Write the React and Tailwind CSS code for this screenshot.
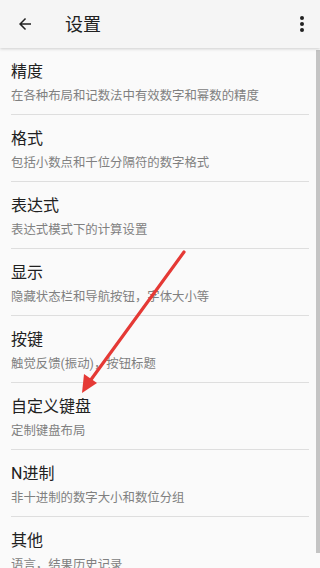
import React from 'react';

const items = [
  { title: '精度', desc: '在各种布局和记数法中有效数字和幂数的精度' },
  { title: '格式', desc: '包括小数点和千位分隔符的数字格式' },
  { title: '表达式', desc: '表达式模式下的计算设置' },
  { title: '显示', desc: '隐藏状态栏和导航按钮，字体大小等' },
  { title: '按键', desc: '触觉反馈(振动)，按钮标题' },
  { title: '自定义键盘', desc: '定制键盘布局' },
  { title: 'N进制', desc: '非十进制的数字大小和数位分组' },
  { title: '其他', desc: '语言，结果历史记录' },
];

export default function App() {
  return (
    <div
      className="relative w-[320px] h-[568px] overflow-hidden bg-[#fafafa]"
      style={{ fontFamily: 'Roboto, "Noto Sans CJK SC", sans-serif' }}
    >
      {/* Toolbar */}
      <div className="relative z-10 h-[48px] bg-[#f5f5f5] flex items-center shadow-[0_1px_3px_rgba(0,0,0,0.18)]">
        <div className="w-[50px] flex justify-center">
          <svg width="18" height="18" viewBox="0 0 24 24">
            <path d="M20 11H7.83l5.59-5.59L12 4l-8 8 8 8 1.41-1.41L7.83 13H20v-2z" fill="#212121" />
          </svg>
        </div>
        <div className="ml-[15px] text-[18px] text-[#212121]">设置</div>
        <div className="ml-auto mr-[16px] flex flex-col items-center gap-[2px]">
          <span className="w-[4px] h-[4px] rounded-full bg-[#212121]" />
          <span className="w-[4px] h-[4px] rounded-full bg-[#212121]" />
          <span className="w-[4px] h-[4px] rounded-full bg-[#212121]" />
        </div>
      </div>

      {/* List */}
      <div className="flex flex-col">
        {items.map((it) => (
          <div key={it.title} className="mx-[11px] pt-[14px] pb-[10px] border-b border-[#dedede]">
            <div className="text-[16px] leading-[20px] text-[#212121]">{it.title}</div>
            <div className="mt-[6px] text-[12.4px] leading-[16px] text-[#808080] whitespace-nowrap">{it.desc}</div>
          </div>
        ))}
      </div>

      {/* Scrollbar */}
      <div className="absolute right-0 top-[50px] w-[4px] h-[503px] bg-[#c4c4c4]" />

      {/* Annotation arrow */}
      <svg className="absolute left-0 top-0 pointer-events-none" width="320" height="568">
        <line x1="184" y1="252" x2="90" y2="381" stroke="#e53935" strokeWidth="3.2" strokeLinecap="round" />
        <polygon points="82,393 84,374 97,383" fill="#e53935" />
      </svg>
    </div>
  );
}
